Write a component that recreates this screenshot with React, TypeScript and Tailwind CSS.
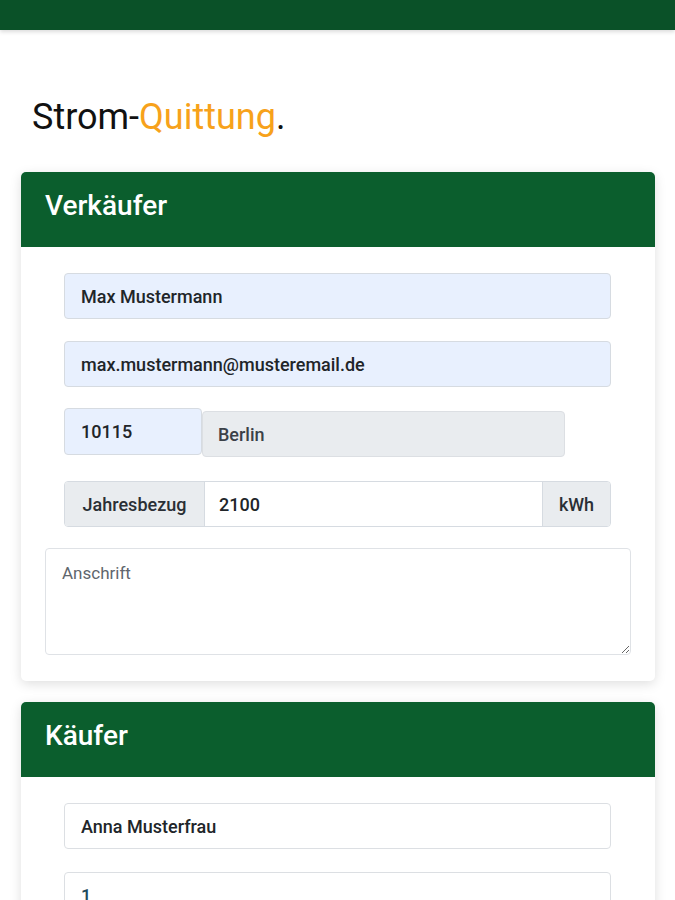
import React from 'react';

const font = { fontFamily: 'Roboto, "Noto Sans", sans-serif' };

const Card: React.FC<{ title: string; children: React.ReactNode }> = ({ title, children }) => (
  <div className="ml-[21px] mr-[20px] bg-white rounded-[5px] shadow-[0_3px_12px_rgba(0,0,0,0.13)] overflow-hidden">
    <div className="h-[75px] bg-[#0b5e2d] px-[24px] pt-[20px] text-[28px] font-medium leading-none text-white">{title}</div>
    <div className="px-[24px] pt-[26px] pb-[26px]">{children}</div>
  </div>
);

export default function App() {
  return (
    <div className="min-h-screen bg-white text-[#212529]" style={font}>
      <div className="h-[30px] bg-[#0a5128] shadow-[0_2px_4px_rgba(0,0,0,0.14)]" />

      <h1 className="mt-[69px] ml-[32px] text-[36px] leading-none text-[#111]">
        Strom-<span className="text-[#f7a21b]">Quittung</span>.
      </h1>

      <div className="mt-[37px]">
        <Card title="Verkäufer">
          <div className="pl-[19px] pr-[20px] flex flex-col">
            <input
              readOnly
              value="Max Mustermann"
              className="h-[46px] rounded-[4px] border border-[#d6dbe1] bg-[#e8f0fe] px-[16px] text-[18px] font-medium outline-none"
            />
            <input
              readOnly
              value="max.mustermann@musteremail.de"
              className="mt-[22px] h-[46px] rounded-[4px] border border-[#d6dbe1] bg-[#e8f0fe] px-[16px] text-[18px] font-medium outline-none"
            />
            <div className="mt-[21px] flex items-start">
              <input
                readOnly
                value="10115"
                className="w-[138px] h-[47px] rounded-[4px] border border-[#d6dbe1] bg-[#e8f0fe] px-[16px] text-[18px] font-medium outline-none"
              />
              <input
                readOnly
                value="Berlin"
                className="mt-[3px] w-[363px] h-[46px] rounded-[4px] border border-[#dcdfe3] bg-[#e9ecef] px-[15px] text-[18px] font-medium text-[#3b4148] outline-none"
              />
            </div>
            <div className="mt-[24px] flex h-[46px] rounded-[4px] border border-[#d6dbe1] overflow-hidden">
              <div className="w-[140px] flex items-center justify-center bg-[#e9ecef] border-r border-[#d6dbe1] text-[18px] font-medium text-[#2a2f35]">
                Jahresbezug
              </div>
              <input
                readOnly
                value="2100"
                className="flex-1 min-w-0 bg-white px-[14px] text-[18px] font-medium outline-none"
              />
              <div className="w-[68px] flex items-center justify-center bg-[#e9ecef] border-l border-[#d6dbe1] text-[18px] font-medium text-[#2a2f35]">
                kWh
              </div>
            </div>
          </div>
          <textarea
            placeholder="Anschrift"
            className="mt-[21px] block w-full h-[107px] rounded-[4px] border border-[#dfe2e6] px-[16px] py-[12px] text-[17px] placeholder:text-[#5f666d] outline-none"
          />
        </Card>
      </div>

      <div className="mt-[21px] pb-10">
        <Card title="Käufer">
          <div className="pl-[19px] pr-[20px] flex flex-col">
            <input
              readOnly
              value="Anna Musterfrau"
              className="h-[46px] rounded-[4px] border border-[#dcdfe3] bg-white px-[16px] text-[18px] font-medium outline-none"
            />
            <input
              readOnly
              value="1"
              className="mt-[23px] h-[46px] rounded-[4px] border border-[#dcdfe3] bg-white px-[16px] text-[18px] font-medium text-[#1d4a5a] outline-none"
            />
            <input
              readOnly
              value="10117"
              className="mt-[22px] h-[46px] rounded-[4px] border border-[#dcdfe3] bg-white px-[16px] text-[18px] font-medium outline-none"
            />
          </div>
        </Card>
      </div>
    </div>
  );
}
